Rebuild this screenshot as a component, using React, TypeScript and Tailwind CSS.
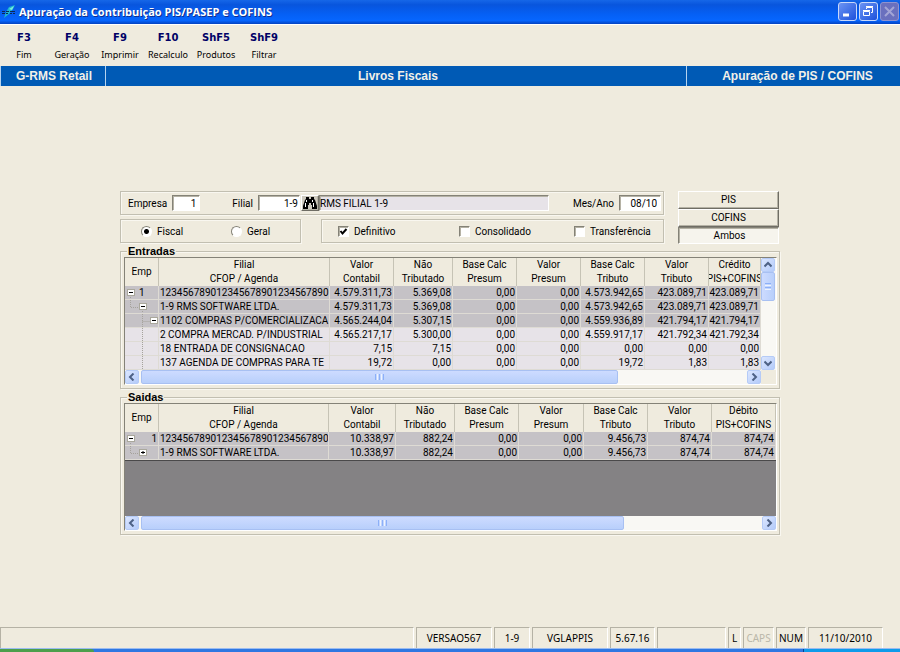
import { ReactNode } from "react";
import clsx from "clsx";

const toolbar = [
  { key: "F3", label: "Fim" },
  { key: "F4", label: "Geração" },
  { key: "F9", label: "Imprimir" },
  { key: "F10", label: "Recalculo" },
  { key: "ShF5", label: "Produtos" },
  { key: "ShF9", label: "Filtrar" },
];

type Row = { tree: TreeKind; emp?: string; dark?: boolean; cells: string[] };
type TreeKind = "root" | "rootLast" | "child" | "childPlus" | "leafOpen" | "line";

const entradas: Row[] = [
  {
    tree: "root",
    emp: "1",
    dark: true,
    cells: ["123456789012345678901234567890", "4.579.311,73", "5.369,08", "0,00", "0,00", "4.573.942,65", "423.089,71", "423.089,71"],
  },
  {
    tree: "child",
    dark: true,
    cells: ["1-9 RMS SOFTWARE LTDA.", "4.579.311,73", "5.369,08", "0,00", "0,00", "4.573.942,65", "423.089,71", "423.089,71"],
  },
  {
    tree: "leafOpen",
    dark: true,
    cells: ["1102 COMPRAS P/COMERCIALIZACA", "4.565.244,04", "5.307,15", "0,00", "0,00", "4.559.936,89", "421.794,17", "421.794,17"],
  },
  {
    tree: "line",
    cells: ["2 COMPRA MERCAD. P/INDUSTRIAL", "4.565.217,17", "5.300,00", "0,00", "0,00", "4.559.917,17", "421.792,34", "421.792,34"],
  },
  {
    tree: "line",
    cells: ["18 ENTRADA DE CONSIGNACAO", "7,15", "7,15", "0,00", "0,00", "0,00", "0,00", "0,00"],
  },
  {
    tree: "line",
    cells: ["137 AGENDA DE COMPRAS PARA TE", "19,72", "0,00", "0,00", "0,00", "19,72", "1,83", "1,83"],
  },
];

const saidas: Row[] = [
  {
    tree: "rootLast",
    emp: "1",
    dark: true,
    cells: ["123456789012345678901234567890", "10.338,97", "882,24", "0,00", "0,00", "9.456,73", "874,74", "874,74"],
  },
  {
    tree: "childPlus",
    dark: true,
    cells: ["1-9 RMS SOFTWARE LTDA.", "10.338,97", "882,24", "0,00", "0,00", "9.456,73", "874,74", "874,74"],
  },
];

const headers = [
  ["Filial", "CFOP / Agenda"],
  ["Valor", "Contabil"],
  ["Não", "Tributado"],
  ["Base Calc", "Presum"],
  ["Valor", "Presum"],
  ["Base Calc", "Tributo"],
  ["Valor", "Tributo"],
];

const statusPanels = [
  { text: "VERSAO567", width: "w-[76px]" },
  { text: "1-9", width: "w-[36px]" },
  { text: "VGLAPPIS", width: "w-[76px]" },
  { text: "5.67.16", width: "w-[45px]" },
  { text: "", width: "w-[69px]" },
  { text: "L", width: "w-[13px]" },
  { text: "CAPS", width: "w-[31px]", off: true },
  { text: "NUM", width: "w-[30px]" },
  { text: "11/10/2010", width: "w-[75px]" },
];

const sunken =
  "border border-t-[#848277] border-l-[#848277] border-b-white border-r-white shadow-[inset_1px_1px_0_#b5b2a5]";
const etched =
  "border border-[#c2bfb1] shadow-[inset_1px_1px_0_#f9f7f0,1px_1px_0_#f9f7f0]";
const raised =
  "border border-t-white border-l-white border-r-[#6f6d64] border-b-[#6f6d64] shadow-[inset_-1px_-1px_0_#b5b2a5]";

function Logo() {
  return (
    <svg width="14" height="14" viewBox="0 0 14 14" aria-hidden="true">
      <path d="M2 13L4 7L7 2L13 0L11 4L7 9Z" fill="#1fb8d0" />
      <path d="M7 4L12 1L10 5Z" fill="#7df0dc" />
      <path d="M0 6.500h3M0 8.500h3M4 6.500h3M4 8.500h2M8 6.500h5M8 8.500h2M11 8.500h2" stroke="#0c2a55" />
    </svg>
  );
}

function Binoculars() {
  return (
    <svg width="16" height="14" viewBox="0 0 16 14" aria-hidden="true">
      <path
        d="M4 1h3v2h2V1h3v2l1 1 2 6v3h-5V9H9V7H7v2H6v4H1v-3l2-6 1-1z"
        fill="#000"
      />
      <path d="M4.500 4v2M3.500 7v4M10.500 4v2M11.500 7v4" stroke="#fff" strokeWidth="1" />
    </svg>
  );
}

function Tree({ kind }: { kind: TreeKind }) {
  const boxX = { root: 2, rootLast: 2, child: 14, childPlus: 14, leafOpen: 25, line: -1 }[kind];
  const dots = {
    root: "M5.500 11v3",
    rootLast: "M5.500 11v3",
    child: "M5.500 0v7.500h8M17.500 11v3",
    childPlus: "M5.500 0v7.500h8",
    leafOpen: "M17.500 0v14M17.500 7.500h8",
    line: "M17.500 0v14",
  }[kind];
  return (
    <svg width="33" height="13" viewBox="0 0 33 13" className="block" aria-hidden="true">
      <path d={dots} fill="none" stroke="#a5a29c" strokeDasharray="1 1" />
      {boxX >= 0 && (
        <>
          <rect x={boxX + 0.5} y="3.500" width="7" height="6" fill="#fff" stroke="#aaa89c" />
          <path
            d={`M${boxX + 2} 6.500h4${kind === "childPlus" ? `M${boxX + 4} 5v3` : ""}`}
            stroke="#000"
          />
        </>
      )}
    </svg>
  );
}

function Arrow({ d }: { d: string }) {
  return (
    <svg width="8" height="8" viewBox="0 0 8 8" aria-hidden="true">
      <path d={d} fill="none" stroke="#4d6185" strokeWidth="2" />
    </svg>
  );
}

function ScrollButton({ label, d }: { label: string; d: string }) {
  return (
    <button
      type="button"
      aria-label={label}
      className="flex h-[14px] w-[14px] shrink-0 items-center justify-center rounded-[2px] border border-[#b5cbf7] bg-gradient-to-br from-[#dbe6fe] to-[#b4cbfa]"
    >
      <Arrow d={d} />
    </button>
  );
}

function HScroll({ thumb }: { thumb: string }) {
  return (
    <div className="flex h-[14px] flex-1 bg-[#f9f8f4]">
      <ScrollButton label="Rolar para a esquerda" d="M5.500 0.500L2 4l3.500 3.500" />
      <div className="flex-1 px-[2px]">
        <div
          className={clsx(
            "flex h-[14px] items-center justify-center gap-px rounded-[2px] border border-[#a8c0f2] bg-gradient-to-b from-[#cddbff] to-[#b8cffb]",
            thumb
          )}
        >
          <span className="h-1.5 w-px bg-[#8cb0f8]" />
          <span className="h-1.5 w-px bg-[#eef4fe]" />
          <span className="h-1.5 w-px bg-[#8cb0f8]" />
          <span className="h-1.5 w-px bg-[#eef4fe]" />
          <span className="h-1.5 w-px bg-[#8cb0f8]" />
        </div>
      </div>
      <ScrollButton label="Rolar para a direita" d="M2.500 0.500L6 4L2.500 7.500" />
    </div>
  );
}

function Grid({
  rows,
  last,
  widths,
}: {
  rows: Row[];
  last: [string, string];
  widths: string[];
}) {
  const th =
    "h-[28px] overflow-hidden border-r border-[#c6c3b5] p-0 text-center font-normal";
  return (
    <table className="w-full table-fixed border-separate border-spacing-0 leading-[14px] whitespace-nowrap">
      <colgroup>
        {widths.map((w, i) => (
          <col key={i} className={w} />
        ))}
      </colgroup>
      <thead>
        <tr>
          <th className={th}>Emp</th>
          {[...headers, last].map(([a, b], i) => (
            <th key={i} className={th}>
              <span className="block">{a}</span>
              <span className="flex justify-center">{b}</span>
            </th>
          ))}
        </tr>
      </thead>
      <tbody>
        {rows.map((row, i) => (
          <tr key={i} className={row.dark ? "bg-[#c5c2c6]" : "bg-[#e7e3e8]"}>
            <td className="h-[14px] border-r border-b border-[#dedbd4] p-0">
              <div className="relative">
                <Tree kind={row.tree} />
                {row.emp && (
                  <span
                    className={clsx(
                      "absolute top-0 leading-[13px]",
                      row.tree === "root" ? "left-[14px]" : "right-px"
                    )}
                  >
                    {row.emp}
                  </span>
                )}
              </div>
            </td>
            {row.cells.map((c, j) => (
              <td
                key={j}
                className={clsx(
                  "h-[14px] overflow-hidden border-r border-b border-[#dedbd4] p-0 leading-[13px]",
                  j === 0 ? "pl-px text-left" : "pr-px text-right"
                )}
              >
                {c}
              </td>
            ))}
          </tr>
        ))}
      </tbody>
    </table>
  );
}

function Group({ title, children }: { title: string; children: ReactNode }) {
  return (
    <fieldset className={clsx("min-w-0 pr-[2px] pb-[3px] pl-[3px]", etched)}>
      <legend className="ml-[3px] bg-[#efebde] px-px font-['Liberation_Sans',sans-serif] text-[11px] leading-[12px] font-bold">
        {title}
      </legend>
      <div className="border border-t-[#848277] border-l-[#848277] border-r-white border-b-white">
        {children}
      </div>
    </fieldset>
  );
}

const check =
  "h-[11px] w-[11px] appearance-none border border-t-[#848277] border-l-[#848277] border-r-white border-b-white bg-white shadow-[inset_1px_1px_0_#b5b2a5]";
const radio =
  "h-[11px] w-[11px] appearance-none rounded-full border border-t-[#848277] border-l-[#848277] border-r-white border-b-white bg-white checked:bg-[radial-gradient(circle,#000_2px,#fff_3px)]";
const winButton =
  "h-[19px] w-[19px] rounded-[3px] border border-[#c8d8fa] bg-gradient-to-br from-[#6c93f3] to-[#1c4fdb]";

export default function App() {
  return (
    <div className="flex min-h-screen flex-col bg-[#efebde] font-[Roboto,'Liberation_Sans',sans-serif] text-[10px] text-black">
      <header className="flex h-6 items-center bg-[linear-gradient(#1667e8,#0855dd_20%,#0560f5_60%,#0666ff_85%,#0442c0)] pl-[2px]">
        <Logo />
        <h1 className="ml-[3px] flex-1 font-['Open_Sans',sans-serif] text-[11px] font-bold text-white [text-shadow:1px_1px_0_#0f2f8f]">
          Apuração da Contribuição PIS/PASEP e COFINS
        </h1>
        <div className="flex gap-[2px] pr-px pb-px">
          <button type="button" aria-label="Minimizar" className={winButton}>
            <svg width="17" height="17" viewBox="0 0 17 17">
              <path d="M4 12h6" stroke="#fff" strokeWidth="3" />
            </svg>
          </button>
          <button type="button" aria-label="Restaurar" className={winButton}>
            <svg width="17" height="17" viewBox="0 0 17 17" fill="none" stroke="#fff">
              <path d="M6.500 6V4.500h6v5H11M6 3.500h7M3.500 8.500h6v4h-6zM3 7.500h7" />
            </svg>
          </button>
          <button
            type="button"
            aria-label="Fechar"
            disabled
            className="h-[19px] w-[19px] rounded-[3px] border border-[#8f93cf] bg-[#6a70be]"
          >
            <svg width="17" height="17" viewBox="0 0 17 17">
              <path d="M4 4l9 9M13 4l-9 9" stroke="#a3a5d6" strokeWidth="2" />
            </svg>
          </button>
        </div>
      </header>

      <nav className="flex h-[42px] border-t border-white">
        {toolbar.map((t) => (
          <button
            key={t.key}
            type="button"
            className="flex w-12 flex-col items-center pt-[6px] whitespace-nowrap"
          >
            <span className="font-['DejaVu_Sans',sans-serif] text-[10px] leading-[14px] font-bold text-[#000066]">
              {t.key}
            </span>
            <span className="mt-1 font-['Noto_Sans',sans-serif] text-[9px] leading-[12px]">
              {t.label}
            </span>
          </button>
        ))}
      </nav>

      <div className="flex h-5 items-center bg-[#005ab5] font-['Liberation_Sans',sans-serif] text-[12px] leading-5 font-bold text-[#f2f0e8]">
        <div className="w-[106px] border-r border-l border-[#b5d3ef] pl-[2px] text-center">
          G-RMS Retail
        </div>
        <h2 className="flex-1 pl-1 text-center">Livros Fiscais</h2>
        <div className="w-[214px] border-l border-[#b5d3ef] pl-2 text-center">
          Apuração de PIS / COFINS
        </div>
      </div>

      <main className="mx-auto w-full max-w-[660px] flex-1 pt-[105px]">
        <div className="flex gap-[14px]">
          <div className="flex flex-1 flex-col gap-1">
            <div className={clsx("flex h-6 items-center pl-[7px] pr-[2px]", etched)}>
              <label htmlFor="empresa">Empresa</label>
              <input
                id="empresa"
                defaultValue="1"
                className={clsx("ml-[5px] h-4 w-[28px] bg-white pr-[3px] text-right", sunken)}
              />
              <label htmlFor="filial" className="ml-8">
                Filial
              </label>
              <input
                id="filial"
                defaultValue="1-9"
                className={clsx("ml-[5px] h-4 w-[42px] bg-white pr-px text-right", sunken)}
              />
              <button
                type="button"
                aria-label="Procurar filial"
                className={clsx("ml-px flex h-4 w-[18px] items-center justify-center bg-[#cdc9bd]", raised)}
              >
                <Binoculars />
              </button>
              <input
                aria-label="Nome da filial"
                readOnly
                defaultValue="RMS FILIAL 1-9"
                className={clsx("h-4 min-w-0 flex-1 bg-[#e7e3e8]", sunken)}
              />
              <label htmlFor="mes" className="ml-6">
                Mes/Ano
              </label>
              <input
                id="mes"
                defaultValue="08/10"
                className={clsx("ml-[5px] h-4 w-[42px] bg-white pr-[3px] text-right", sunken)}
              />
            </div>
            <div className="flex gap-5">
              <div className={clsx("flex h-6 w-[181px] items-center pl-5", etched)}>
                <label className="flex w-[90px] items-center gap-[5px]">
                  <input type="radio" name="tipo" defaultChecked className={radio} />
                  Fiscal
                </label>
                <label className="flex items-center gap-[5px]">
                  <input type="radio" name="tipo" className={radio} />
                  Geral
                </label>
              </div>
              <div className={clsx("flex h-6 flex-1 items-center pl-4", etched)}>
                <label className="flex w-[121px] items-center gap-[5px]">
                  <span className="relative flex">
                    <input type="checkbox" defaultChecked className={clsx("peer", check)} />
                    <svg
                      width="11"
                      height="11"
                      viewBox="0 0 11 11"
                      className="pointer-events-none absolute inset-0 hidden peer-checked:block"
                    >
                      <path d="M2.500 5l2 2.500L8.500 3" fill="none" stroke="#000" strokeWidth="2" />
                    </svg>
                  </span>
                  Definitivo
                </label>
                <label className="flex w-[115px] items-center gap-[5px]">
                  <input type="checkbox" className={check} />
                  Consolidado
                </label>
                <label className="flex items-center gap-[5px]">
                  <input type="checkbox" className={check} />
                  Transferência
                </label>
              </div>
            </div>
          </div>
          <div className="mr-px flex w-[101px] flex-col">
            <button type="button" className={clsx("h-[18px] leading-4", raised)}>
              PIS
            </button>
            <button type="button" className={clsx("h-[18px] leading-4", raised)}>
              COFINS
            </button>
            <button
              type="button"
              aria-pressed="true"
              className={clsx("h-[17px] bg-[#f6f4ed] pl-[2px] leading-4", sunken)}
            >
              Ambos
            </button>
          </div>
        </div>

        <div className="mt-px">
          <Group title="Entradas">
            <div className="flex">
              <div className="min-w-0 flex-1">
                <Grid
                  rows={entradas}
                  last={["Crédito", "PIS+COFINS"]}
                  widths={["w-[34px]", "", "w-[64px]", "w-[59px]", "w-[64px]", "w-[64px]", "w-[64px]", "w-[64px]", "w-[52px]"]}
                />
              </div>
              <div className="flex w-[15px] flex-col bg-[#f9f8f4]">
                <ScrollButton label="Rolar para cima" d="M0.500 5.500L4 2l3.500 3.500" />
                <div className="flex h-[29px] w-[14px] flex-col items-center justify-center gap-px rounded-[2px] border border-[#a8c0f2] bg-gradient-to-r from-[#cddbff] to-[#b8cffb]">
                  <span className="h-px w-1.5 bg-[#8cb0f8]" />
                  <span className="h-px w-1.5 bg-[#eef4fe]" />
                  <span className="h-px w-1.5 bg-[#8cb0f8]" />
                  <span className="h-px w-1.5 bg-[#eef4fe]" />
                </div>
                <div className="flex-1" />
                <ScrollButton label="Rolar para baixo" d="M0.500 2.500L4 6l3.500-3.500" />
              </div>
            </div>
            <div className="flex pr-[15px]">
              <HScroll thumb="w-[79%]" />
            </div>
          </Group>
        </div>

        <div className="mt-[2px]">
          <Group title="Saidas">
            <Grid
              rows={saidas}
              last={["Débito", "PIS+COFINS"]}
              widths={["w-[34px]", "", "w-[67px]", "w-[59px]", "w-[64px]", "w-[65px]", "w-[64px]", "w-[64px]", "w-[64px]"]}
            />
            <div className="h-14 border-t border-[#4a494a] bg-[#848284]" />
            <HScroll thumb="w-[78%]" />
          </Group>
        </div>
      </main>

      <footer className="font-['Noto_Sans',sans-serif] text-[10px] leading-5">
        <div className="flex h-[21px] gap-[2px] pr-[17px]">
          <div className="flex-1 border-t border-r border-l border-t-[#b5b2a5] border-r-white border-l-[#b5b2a5]" />
          {statusPanels.map((p, i) => (
            <div
              key={i}
              className={clsx(
                "border-t border-r border-l border-t-[#b5b2a5] border-r-white border-l-[#b5b2a5] text-center",
                p.width,
                p.off && "text-[#bab7a9]"
              )}
            >
              {p.text}
            </div>
          ))}
        </div>
        <div className="flex h-1 border-t border-[#9cbcf0] bg-[#2f77e2]">
          <div className="w-[94px] rounded-tr bg-[#4c9f4c]" />
          <div className="flex-1" />
          <div className="w-[97px] border-l border-[#0b3f8f] bg-[#0f9bea]" />
        </div>
      </footer>
    </div>
  );
}
